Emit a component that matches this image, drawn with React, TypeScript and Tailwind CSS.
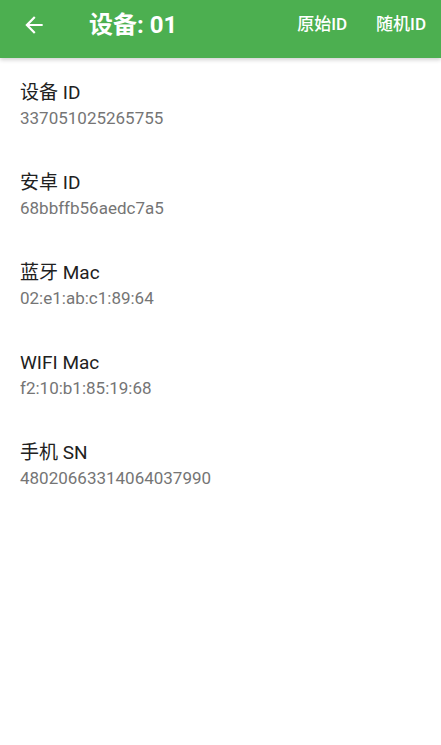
const items = [
  { label: '设备 ID', value: '337051025265755' },
  { label: '安卓 ID', value: '68bbffb56aedc7a5' },
  { label: '蓝牙 Mac', value: '02:e1:ab:c1:89:64' },
  { label: 'WIFI Mac', value: 'f2:10:b1:85:19:68' },
  { label: '手机 SN', value: '48020663314064037990' },
]

const font = { fontFamily: 'Roboto, "Noto Sans CJK SC", sans-serif' }

export default function App() {
  return (
    <div className="min-h-[745px] w-[441px] bg-white" style={font}>
      {/* Toolbar */}
      <div className="flex h-[58px] items-center bg-[#4caf50] pb-2 shadow-[0_2px_4px_rgba(0,0,0,0.18)]">
        <div className="flex w-[89px] items-center pl-[21px]">
          <svg width="26" height="26" viewBox="0 0 24 24" fill="white">
            <path d="M20 11H7.83l5.59-5.59L12 4l-8 8 8 8 1.41-1.41L7.83 13H20v-2z" />
          </svg>
        </div>
        <h1 className="flex-1 text-[24px] font-bold text-white">设备: 01</h1>
        <button className="mr-[29px] text-[17px] font-medium text-white">原始ID</button>
        <button className="mr-[15px] text-[17px] font-medium text-white">随机ID</button>
      </div>

      {/* Info list */}
      <div className="flex flex-col pt-[22px]">
        {items.map((item) => (
          <div key={item.label} className="flex h-[90px] flex-col px-5">
            <p className="text-[19px] leading-[26px] text-[#212121]">{item.label}</p>
            <p className="pt-px text-[17px] leading-[22px] text-[#757575]">{item.value}</p>
          </div>
        ))}
      </div>
    </div>
  )
}
